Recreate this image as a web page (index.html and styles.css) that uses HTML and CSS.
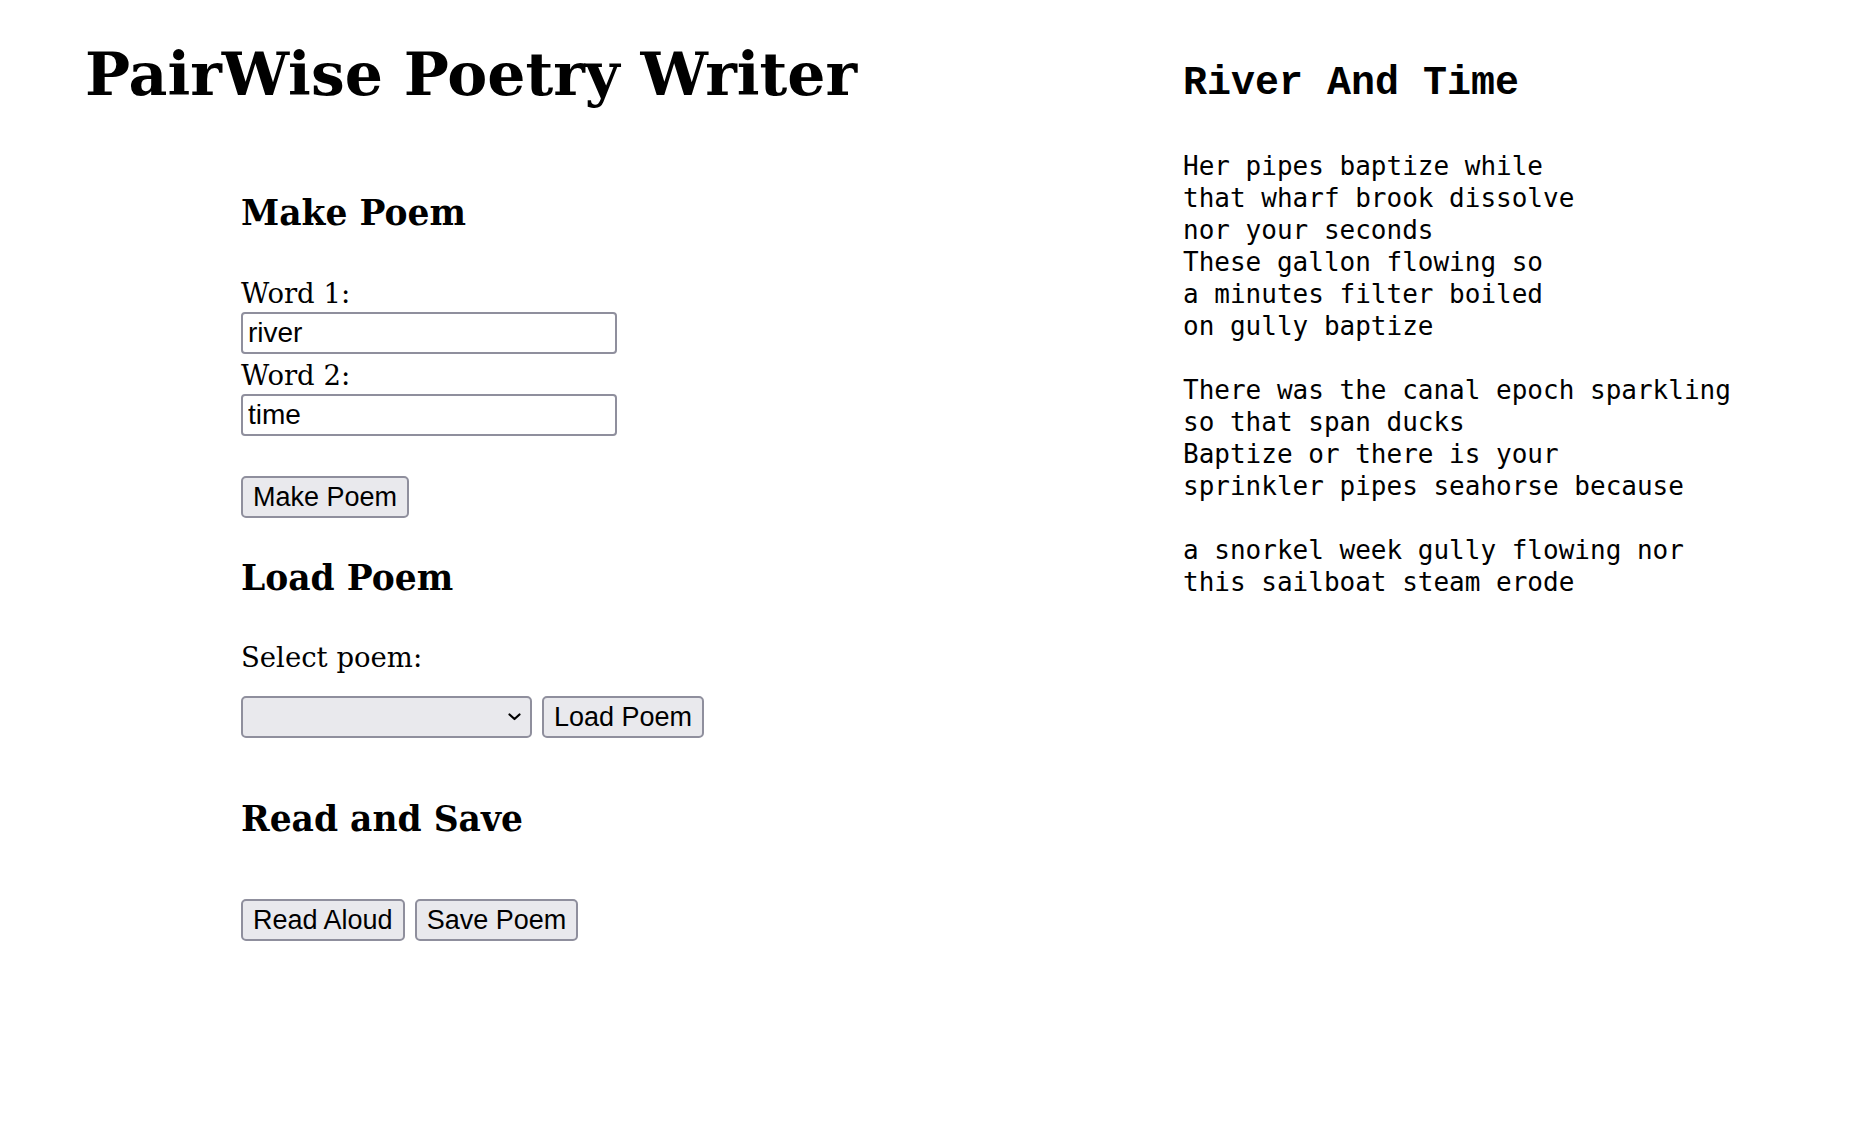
FILE: index.html
```html
<!DOCTYPE html>
<html lang="en">
<head>
<meta charset="utf-8">
<title>PairWise Poetry Writer</title>
<link rel="stylesheet" href="styles.css">
</head>
<body>
<div class="page">
  <main class="left">
    <h1 class="title">PairWise Poetry Writer</h1>
    <section class="panel">
      <h2 class="section-title make-title">Make Poem</h2>
      <div class="fields">
        <label class="field-label" for="word1">Word 1:</label>
        <input class="text-input" id="word1" type="text" value="river">
        <label class="field-label second" for="word2">Word 2:</label>
        <input class="text-input" id="word2" type="text" value="time">
      </div>
      <div class="row make-row"><button class="btn">Make Poem</button></div>

      <h2 class="section-title load-title">Load Poem</h2>
      <p class="select-label">Select poem:</p>
      <div class="row select-row">
        <div class="select-wrap">
          <select class="select"><option></option></select>
          <svg class="chevron" width="13" height="8" viewBox="0 0 13 8"><polyline points="1.5,1.5 6.5,6 11.5,1.5" fill="none" stroke="#000" stroke-width="2.2" stroke-linecap="round" stroke-linejoin="round"/></svg>
        </div>
        <button class="btn">Load Poem</button>
      </div>

      <h2 class="section-title read-title">Read and Save</h2>
      <div class="row read-row">
        <button class="btn">Read Aloud</button>
        <button class="btn">Save Poem</button>
      </div>
    </section>
  </main>
  <aside class="poem">
    <h2 class="poem-title">River And Time</h2>
<pre class="poem-text">Her pipes baptize while
that wharf brook dissolve
nor your seconds
These gallon flowing so
a minutes filter boiled
on gully baptize

There was the canal epoch sparkling
so that span ducks
Baptize or there is your
sprinkler pipes seahorse because

a snorkel week gully flowing nor
this sailboat steam erode</pre>
  </aside>
</div>
</body>
</html>
```

FILE: styles.css
```css
html, body {
  margin: 0;
  padding: 0;
  background: #fff;
  color: #000;
}

body {
  font-family: "DejaVu Serif", "Liberation Serif", serif;
}

.page {
  display: flex;
  align-items: flex-start;
  padding: 38px 0 0 85px;
}

.left {
  flex: none;
  width: 1098px;
}

.title {
  margin: 0;
  font-size: 60px;
  line-height: 72px;
  font-weight: bold;
}

.panel {
  padding-left: 156px;
}

.section-title {
  margin: 0;
  font-size: 34.5px;
  line-height: 46px;
  font-weight: bold;
}

.make-title { margin-top: 80px; }
.load-title { margin-top: 37px; }
.read-title { margin-top: 58px; }

.fields {
  display: flex;
  flex-direction: column;
  align-items: flex-start;
  margin-top: 38px;
}

.field-label {
  display: block;
  font-size: 27.5px;
  line-height: 38px;
}

.field-label.second {
  margin-top: 2px;
}

.text-input {
  box-sizing: border-box;
  width: 376px;
  height: 42px;
  margin: 0;
  padding: 0 5px;
  border: 2px solid #8f8f9d;
  border-radius: 4px;
  background: #fff;
  font-family: "Liberation Sans", Arial, sans-serif;
  font-size: 28px;
  color: #000;
}

.row {
  display: flex;
  gap: 10px;
}

.make-row { margin-top: 40px; }
.select-row { margin-top: 20px; }
.read-row { margin-top: 57px; }

.select-label {
  margin: 37px 0 0;
  font-size: 27.5px;
  line-height: 38px;
}

.btn {
  box-sizing: border-box;
  height: 42px;
  margin: 0;
  padding: 0 10px;
  border: 2px solid #8f8f9d;
  border-radius: 5px;
  background: #e9e9ed;
  color: #000;
  font-family: "Liberation Sans", Arial, sans-serif;
  font-size: 27px;
  line-height: 1;
}

.select-wrap {
  position: relative;
  width: 291px;
  height: 42px;
}

.select {
  box-sizing: border-box;
  width: 291px;
  height: 42px;
  margin: 0;
  border: 2px solid #8f8f9d;
  border-radius: 5px;
  background: #e9e9ed;
  appearance: none;
  -webkit-appearance: none;
  font-family: "Liberation Sans", Arial, sans-serif;
  font-size: 26px;
}

.chevron {
  position: absolute;
  right: 11px;
  top: 17px;
  pointer-events: none;
}

.poem {
  flex: none;
}

.poem-title {
  margin: 22px 0 0;
  font-family: "Liberation Mono", "Courier New", monospace;
  font-size: 40px;
  line-height: 48px;
  font-weight: bold;
}

.poem-text {
  margin: 42px 0 0;
  font-family: "DejaVu Sans Mono", monospace;
  font-size: 26px;
  line-height: 32px;
}
```
